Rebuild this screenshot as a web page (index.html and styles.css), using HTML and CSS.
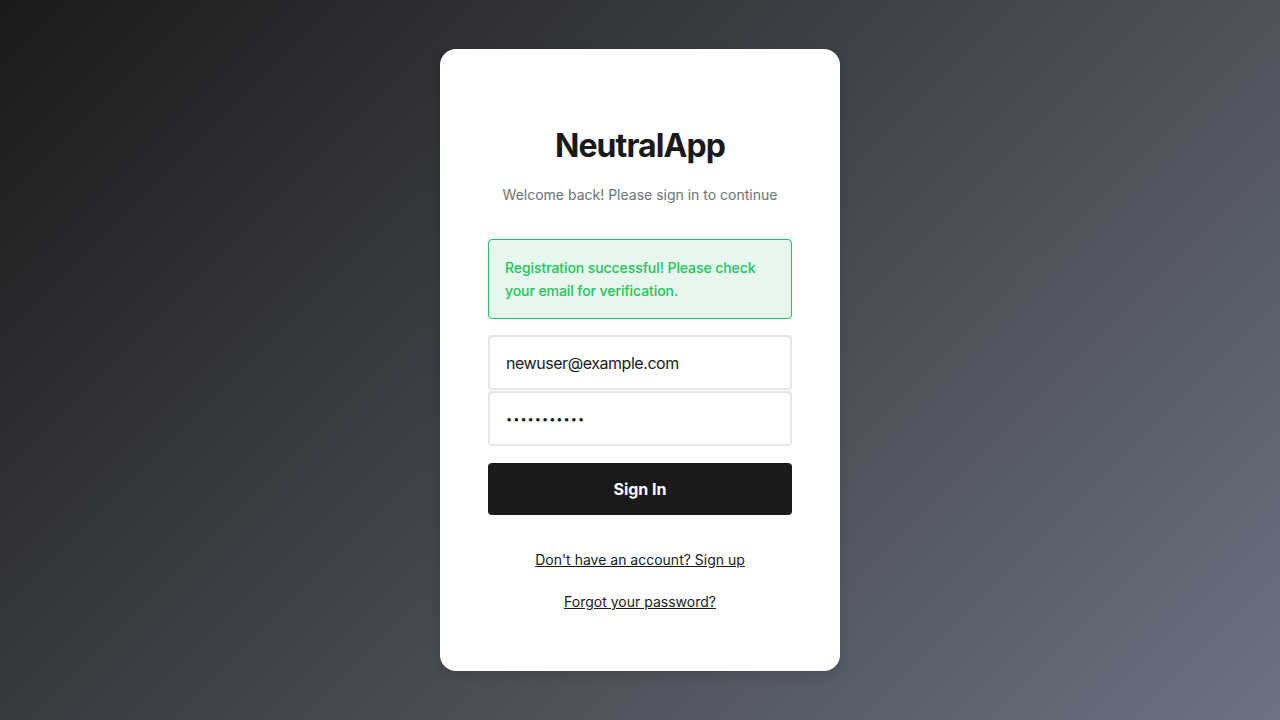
FILE: index.html
```html
<!DOCTYPE html>
<html>
<head>
<meta charset="utf-8">
<link rel="stylesheet" href="styles.css">
</head>
<body>
<main class="page">
  <section class="card">
    <header class="header">
      <h1 class="title">NeutralApp</h1>
      <p class="subtitle">Welcome back! Please sign in to continue</p>
    </header>
    <div class="alert">Registration successful! Please check your email for verification.</div>
    <form class="form">
      <input class="input" type="email" value="newuser@example.com">
      <input class="input input-password" type="password" value="password123">
      <button class="button" type="button">Sign In</button>
    </form>
    <nav class="links">
      <a class="link" href="#">Don't have an account? Sign up</a>
      <a class="link" href="#">Forgot your password?</a>
    </nav>
  </section>
</main>
</body>
</html>
```
FILE: styles.css
```css
* { box-sizing: border-box; }
html, body { margin: 0; height: 100%; }
body {
  font-family: Inter, "Noto Sans", sans-serif;
  background: linear-gradient(135deg, #1a1a1a 0%, #6b7280 100%);
  color: #1a1a1a;
}
.page {
  height: 720px;
  display: flex;
  align-items: center;
  justify-content: center;
}
.card {
  width: 400px;
  height: 622px;
  background: #fff;
  border-radius: 16px;
  padding: 48px;
  box-shadow: 0 4px 12px rgba(0,0,0,0.15);
  display: flex;
  flex-direction: column;
}
.header {
  text-align: center;
  padding-top: 30px;
}
.title {
  margin: 0;
  font-size: 32px;
  font-weight: 700;
  line-height: 38px;
  letter-spacing: -0.9px;
  color: #1a1a1a;
}
.subtitle {
  margin: 20px 0 0;
  font-size: 14px;
  line-height: 20px;
  color: #6b7280;
}
.alert {
  margin-top: 34px;
  padding: 16px;
  border: 1px solid #22c55e;
  background: #e8f7ed;
  color: #22c55e;
  border-radius: 4px;
  font-size: 14px;
  line-height: 23px;
  font-weight: 500;
  letter-spacing: -0.08px;
}
.form {
  margin-top: 16px;
  display: flex;
  flex-direction: column;
  gap: 1px;
}
.input {
  height: 55px;
  padding: 0 16px;
  border: 2px solid #e5e7eb;
  border-radius: 4px;
  font-family: inherit;
  font-size: 16px;
  letter-spacing: -0.45px;
  color: #1a1a1a;
  outline: none;
}
.input-password {
  font-size: 11px;
  letter-spacing: 1px;
}
.button {
  margin-top: 16px;
  height: 52px;
  border: none;
  border-radius: 4px;
  background: #1a1a1a;
  color: #fff;
  font-family: inherit;
  font-size: 16px;
  font-weight: 700;
}
.links {
  margin-top: 35px;
  display: flex;
  flex-direction: column;
  align-items: center;
  gap: 22px;
}
.link {
  font-size: 14px;
  line-height: 20px;
  color: #1a1a1a;
  text-decoration: underline;
}
```
